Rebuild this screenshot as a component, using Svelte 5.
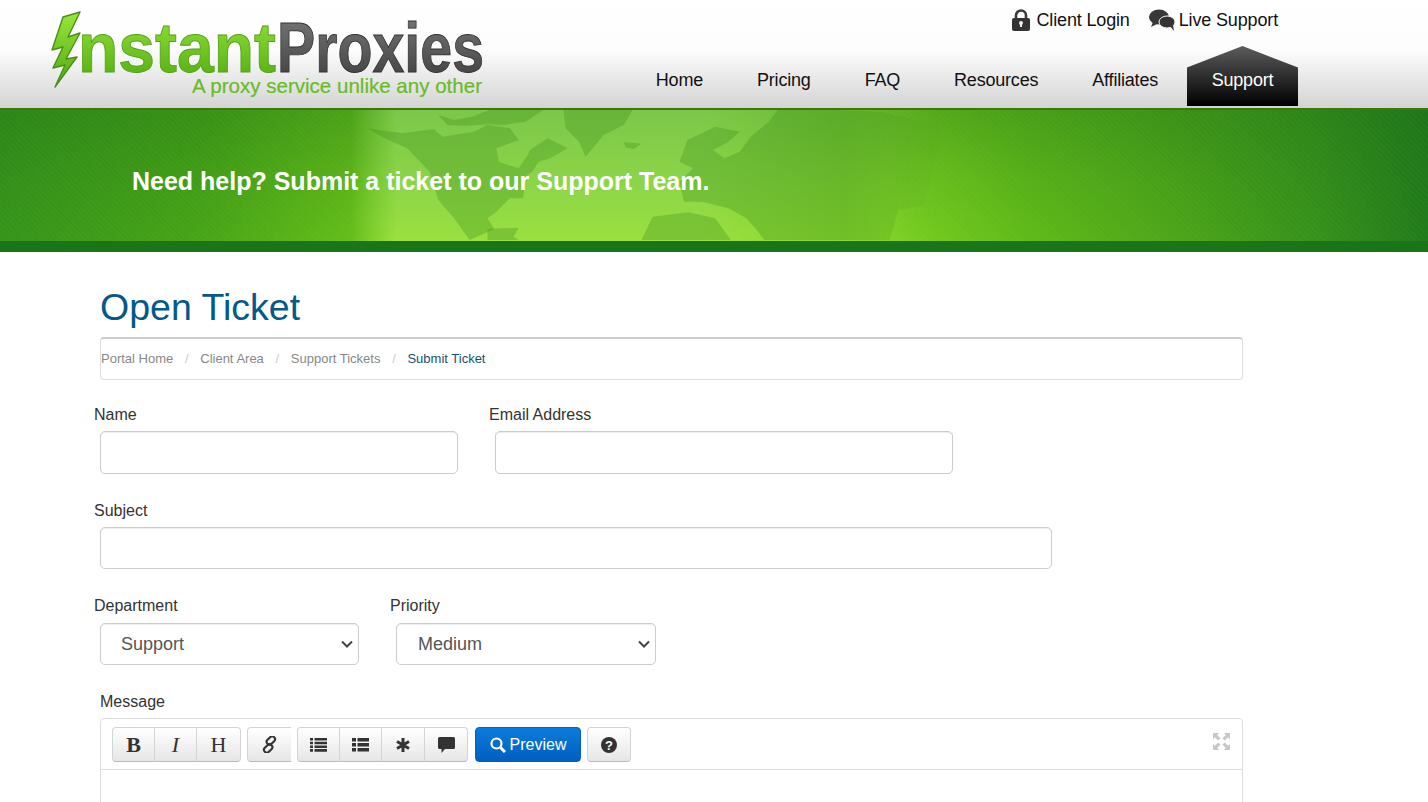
<script>
  const nav = ['Home', 'Pricing', 'FAQ', 'Resources', 'Affiliates'];
  const crumbs = ['Portal Home', 'Client Area', 'Support Tickets'];
</script>

<div class="page">
  <header>
    <a class="logo" href="#top" aria-label="InstantProxies">
      <svg width="490" height="104" viewBox="0 0 490 104">
        <defs>
          <linearGradient id="lg-green" x1="0" y1="0" x2="0" y2="1">
            <stop offset="0" stop-color="#97e83c" />
            <stop offset="1" stop-color="#4fa80f" />
          </linearGradient>
          <linearGradient id="lg-grey" x1="0" y1="0" x2="0" y2="1">
            <stop offset="0" stop-color="#7c7c7c" />
            <stop offset="1" stop-color="#3c3c3c" />
          </linearGradient>
        </defs>
        <polygon
          points="80,12 63,17 52,50 63,47 53,68 65,65 55,87 77,57 66,59 80,33 68,37"
          fill="url(#lg-green)" stroke="#4c8f18" stroke-width="1.4" stroke-linejoin="round"
        />
        <text class="word" x="78" y="72" textLength="198" lengthAdjust="spacingAndGlyphs"
          fill="url(#lg-green)" stroke="#57a01c">nstant</text>
        <text class="word" x="277" y="72" textLength="207" lengthAdjust="spacingAndGlyphs"
          fill="url(#lg-grey)" stroke="#333">Proxies</text>
        <text class="tag" x="192" y="93" textLength="290" lengthAdjust="spacingAndGlyphs">A proxy service unlike any other</text>
      </svg>
    </a>
    <div class="right">
      <div class="top-links">
        <a href="#top">
          <svg width="18" height="22" viewBox="0 0 18 22">
            <path d="M4 10V6.5a5 5 0 0 1 10 0V10" fill="none" stroke="#3a3a3a" stroke-width="2.6" />
            <rect x="0" y="9" width="18" height="13" rx="2" fill="#333" />
            <circle cx="9" cy="14" r="2" fill="#eee" />
            <rect x="8" y="14" width="2" height="4" fill="#eee" />
          </svg>
          Client Login
        </a>
        <a class="chat" href="#top">
          <svg width="26" height="23" viewBox="0 0 26 23">
            <ellipse cx="10" cy="8" rx="10" ry="7.5" fill="#383838" />
            <path d="M4 13l-2 5 6-3z" fill="#383838" />
            <ellipse cx="18" cy="13" rx="8" ry="6" fill="#333" stroke="#f4f4f4" stroke-width="1" />
            <path d="M21 17l4 5-1-6z" fill="#333" />
          </svg>
          Live Support
        </a>
      </div>
      <nav>
        {#each nav as item}
          <a href="#top">{item}</a>
        {/each}
        <a class="active" href="#top">Support</a>
      </nav>
    </div>
  </header>

  <section class="banner">
    <div class="glow"></div>
    <svg class="map" width="700" height="131" viewBox="0 15 1568 393" preserveAspectRatio="none" aria-hidden="true">
      <g fill="#3f8f1c" fill-opacity="0.32">
        <path d="M150 70L230 85 300 72 320 95 390 80 420 60 470 70 490 105 440 130 445 170 490 190 510 150 515 135 555 100 600 130 560 160 535 170 520 200 505 215 500 280 470 280 440 320 420 340 435 372 380 405 345 340 310 285 290 200 240 130 190 100Z" />
        <path d="M590 15L745 15 725 60 680 90 640 155 625 110 595 70Z" />
        <path d="M310 30L345 45 385 35 425 15 545 15 505 50 455 60 420 58 370 62 330 60Z" />
        <path d="M725 112L765 116 748 132 730 128Z" />
        <path d="M850 170L868 105 900 85 930 65 985 80 960 110 925 135 950 160 985 140 1010 95 1050 50 1070 15 1200 15 1300 20 1430 60 1440 120 1420 170 1400 300 1340 315 1320 405 1040 405 1020 370 1000 340 960 310 900 290 860 290 850 230 880 190Z" />
        <path d="M420 372L490 368 478 395 490 405 420 405Z" />
        <path d="M765 405L790 335 870 322 930 340 965 405Z" />
      </g>
    </svg>
    <h2>Need help? Submit a ticket to our Support Team.</h2>
  </section>
  <div class="strip"></div>

  <main>
    <h1>Open Ticket</h1>
    <ol class="crumbs">
      {#each crumbs as c}
        <li><a href="#top">{c}</a><span>/</span></li>
      {/each}
      <li class="current">Submit Ticket</li>
    </ol>

    <form>
      <div class="row">
        <div class="field f-name">
          <label for="name">Name</label>
          <input id="name" class="w-name" type="text" />
        </div>
        <div class="field">
          <label for="email">Email Address</label>
          <input id="email" class="w-email" type="email" />
        </div>
      </div>
      <div class="row">
        <div class="field">
          <label for="subject">Subject</label>
          <input id="subject" class="w-subject" type="text" />
        </div>
      </div>
      <div class="row selects">
        <div class="field f-dept">
          <label for="dept">Department</label>
          <select id="dept" class="w-dept"><option>Support</option></select>
        </div>
        <div class="field">
          <label for="prio">Priority</label>
          <select id="prio" class="w-prio"><option>Medium</option></select>
        </div>
      </div>

      <div class="message">
        <label for="msg">Message</label>
        <div class="editor">
          <div class="toolbar">
            <div class="group">
              <button type="button" class="b-43 glyph bold">B</button>
              <button type="button" class="b-42 glyph ital">I</button>
              <button type="button" class="b-44 glyph">H</button>
            </div>
            <div class="group">
              <button type="button" class="b-44 open" aria-label="Link">
                <svg width="17" height="17" viewBox="0 0 18 18">
                  <g fill="none" stroke="#333" stroke-width="2.200" transform="rotate(-45 9 9)">
                    <rect x="8" y="4" width="10" height="6" rx="3" />
                    <rect x="0" y="8" width="10" height="6" rx="3" />
                  </g>
                </svg>
              </button>
            </div>
            <div class="group">
              <button type="button" class="b-43" aria-label="List">
                <svg width="17" height="14" viewBox="0 0 17 14" fill="#333">
                  <path d="M0 0h3v2.600H0zM4.500 0h12.500v2.600H4.500zM0 3.700h3v2.600H0zM4.500 3.700h12.500v2.600H4.500zM0 7.400h3v2.600H0zM4.500 7.400h12.500v2.600H4.500zM0 11.100h3v2.600H0zM4.500 11.100h12.500v2.600H4.500z" />
                </svg>
              </button>
              <button type="button" class="b-42" aria-label="Ordered list">
                <svg width="17" height="14" viewBox="0 0 17 14" fill="#333">
                  <path d="M0 0h4v3.600H0zM5.500 0h11.500v3.600H5.500zM0 5h4v3.600H0zM5.500 5h11.500v3.600H5.500zM0 10h4v3.600H0zM5.500 10h11.500v3.600H5.500z" />
                </svg>
              </button>
              <button type="button" class="b-43" aria-label="Code">
                <svg width="14" height="14" viewBox="0 0 14 14" fill="none" stroke="#333" stroke-width="3">
                  <path d="M7 0v14M1 3.500l12 7M13 3.500l-12 7" />
                </svg>
              </button>
              <button type="button" class="b-43" aria-label="Quote">
                <svg width="17" height="16" viewBox="0 0 17 16" fill="#333">
                  <path d="M1.500 0h14A1.500 1.500 0 0 1 17 1.500v9A1.500 1.500 0 0 1 15.500 12H7l-3.500 4V12h-2A1.500 1.500 0 0 1 0 10.500v-9A1.500 1.500 0 0 1 1.500 0z" />
                </svg>
              </button>
            </div>
            <button type="button" class="preview">
              <svg width="16" height="16" viewBox="0 0 16 16" fill="none" stroke="#fff">
                <circle cx="6.500" cy="6.500" r="5" stroke-width="2.200" />
                <path d="M10.500 10.500l4.500 4.500" stroke-width="3" />
              </svg>
              Preview
            </button>
            <div class="group">
              <button type="button" class="b-44" aria-label="Help">
                <svg width="16" height="16" viewBox="0 0 16 16">
                  <circle cx="8" cy="8" r="8" fill="#333" />
                  <text x="8" y="12.500" text-anchor="middle" class="q">?</text>
                </svg>
              </button>
            </div>
          </div>
          <svg class="expand" width="17" height="17" viewBox="0 0 18 18" fill="#c8c8c8" aria-hidden="true">
            <path d="M0 0h6.500L4.500 2 8 5.500 5.500 8 2 4.500 0 6.500zM18 0v6.500L16 4.500 12.500 8 10 5.500 13.500 2 11.500 0zM0 18v-6.500L2 13.500 5.500 10 8 12.500 4.500 16 6.500 18zM18 18h-6.500L13.500 16 10 12.500 12.500 10 16 13.500 18 11.500z" />
          </svg>
          <textarea id="msg"></textarea>
        </div>
      </div>
    </form>
  </main>
</div>

<style>
  :global(html), :global(body) { overflow: hidden; }
  .page {
    height: 802px;
    overflow: hidden;
    background: #fff;
    color: #333;
    font-family: "Liberation Sans", Arial, sans-serif;
  }
  a { color: inherit; text-decoration: none; }

  header {
    display: flex;
    height: 108px;
    background: linear-gradient(180deg, #fff 0, #fdfdfd 45%, #d4d4d4 100%);
  }
  .logo { display: block; flex: none; height: 104px; }
  .logo svg { display: block; }
  .word { font: bold 71px "Liberation Sans", Arial, sans-serif; stroke-width: 0.9; }
  .tag { font: 21px "Liberation Sans", Arial, sans-serif; fill: #69bb27; stroke: #69bb27; stroke-width: 0.2; }
  .right { margin-left: auto; padding-right: 130px; }
  .top-links {
    display: flex;
    justify-content: flex-end;
    gap: 19px;
    height: 46px;
    padding: 9px 20px 0 0;
    box-sizing: border-box;
    font-size: 18px;
    letter-spacing: -0.15px;
    color: #111;
  }
  .top-links a { display: flex; align-items: center; gap: 6px; height: 22px; }
  .top-links a.chat { gap: 4px; }
  nav { display: flex; height: 60px; font-size: 18px; letter-spacing: -0.2px; color: #111; }
  nav a { padding: 24px 27px 0; line-height: 21px; }
  nav a.active {
    width: 111px;
    box-sizing: border-box;
    margin-left: 2px;
    padding: 24px 0 0;
    text-align: center;
    color: #fff;
    background: linear-gradient(180deg, #5c5c5c 0, #2e2e2e 50%, #000 100%);
    clip-path: polygon(50% 0, 100% 36%, 100% 100%, 0 100%, 0 36%);
  }

  .banner {
    position: relative;
    overflow: hidden;
    height: 131px;
    border-top: 2px solid #3b7a05;
    background:
      repeating-linear-gradient(45deg, rgba(255,255,255,.02) 0 2px, transparent 2px 4px),
      linear-gradient(180deg, rgba(25,105,20,.34) 0, rgba(25,105,20,.12) 55%, transparent 100%),
      linear-gradient(90deg, #35941a 0, #47a416 14%, #62bc18 24%, #7ed41f 33%, #7ed020 60%, #70c81c 66%, #5fba18 72%, #4da618 82%, #36921a 92%, #217b1a 100%);
  }
  .glow {
    position: absolute;
    left: 350px;
    top: 0;
    width: 590px;
    height: 100%;
    background: linear-gradient(180deg, #7cc74a 0, #8cd548 55%, #9ae040 100%);
    -webkit-mask-image: linear-gradient(90deg, transparent 0, #000 8%, #000 60%, transparent 100%);
    mask-image: linear-gradient(90deg, transparent 0, #000 8%, #000 60%, transparent 100%);
  }
  .map {
    position: absolute;
    left: 300px;
    top: 0;
    display: block;
    -webkit-mask-image: linear-gradient(90deg, #000 0, #000 78%, transparent 92%);
    mask-image: linear-gradient(90deg, #000 0, #000 78%, transparent 92%);
  }
  h2 {
    position: relative;
    margin: 0;
    padding: 56px 0 0 132px;
    font-size: 25px;
    line-height: 30px;
    font-weight: bold;
    color: #fff;
  }
  .strip { height: 11px; background: #1a7519; }

  main { padding: 35px 0 0 100px; width: 1143px; }
  h1 {
    margin: 0 0 10px;
    font-size: 37.500px;
    line-height: 40px;
    font-weight: normal;
    color: #03588c;
  }
  .crumbs {
    display: flex;
    align-items: center;
    height: 43px;
    box-sizing: border-box;
    margin: 0 0 24px;
    padding: 0 0 2px;
    list-style: none;
    border: 1px solid #ddd;
    border-top: 2px solid #ccc;
    border-radius: 4px;
    font-size: 13px;
    color: #888;
  }
  .crumbs span { padding: 0 11.700px; color: #ccc; }
  .crumbs .current { color: #1b4f72; }

  .row { display: flex; margin: 0 0 26px -6px; }
  .field { display: flex; flex-direction: column; align-items: flex-start; }
  .f-name { width: 395px; }
  .f-dept { width: 296px; }
  label { display: block; padding-top: 1px; font-size: 16px; line-height: 20px; color: #333; margin-bottom: 6px; }
  .selects label { margin-bottom: 7px; }
  .field input, .field select { margin-left: 6px; }
  input, select {
    display: block;
    height: 43px;
    box-sizing: border-box;
    border: 1px solid #ccc;
    border-radius: 5px;
    background-color: #fff;
    box-shadow: inset 0 1px 1px rgba(0,0,0,.075);
    font: 18px "Liberation Sans", Arial, sans-serif;
    color: #555;
  }
  select {
    height: 42px;
    padding: 0 0 0 20px;
    appearance: none;
    -webkit-appearance: none;
    background-image: url("data:image/svg+xml,%3Csvg xmlns='http://www.w3.org/2000/svg' width='12' height='8'%3E%3Cpath d='M1 1.500l5 5 5-5' fill='none' stroke='%23444' stroke-width='2'/%3E%3C/svg%3E");
    background-repeat: no-repeat;
    background-position: right 5px center;
  }
  .w-name { width: 358px; }
  .w-email { width: 458px; }
  .w-subject { width: 952px; height: 42px; }
  .w-dept { width: 259px; }
  .w-prio { width: 260px; padding-left: 21px; }

  .editor {
    position: relative;
    border: 1px solid #ddd;
    border-radius: 4px 4px 0 0;
  }
  .toolbar {
    display: flex;
    gap: 6px;
    height: 51px;
    box-sizing: border-box;
    padding: 8px 11px 0;
    border-bottom: 1px solid #ddd;
  }
  .group { display: flex; height: 35px; }
  .group button {
    display: flex;
    align-items: center;
    justify-content: center;
    height: 35px;
    padding: 0;
    border: 1px solid #d4d4d4;
    border-bottom-color: #bbb;
    border-left-width: 0;
    background: linear-gradient(180deg, #fff 0, #e6e6e6 100%);
    color: #333;
    font: 22px "Liberation Serif", "Times New Roman", serif;
  }
  .group button:first-child { border-left-width: 1px; border-radius: 4px 0 0 4px; }
  .group button:last-child { border-radius: 0 4px 4px 0; }
  .group button:only-child { border-radius: 4px; }
  .group button.open { border-right: 0; border-radius: 4px 0 0 4px; }
  .b-42 { width: 42px; }
  .b-43 { width: 43px; }
  .b-44 { width: 44px; }
  .group button.bold { font-weight: bold; }
  .group button.ital { font-style: italic; }
  .preview {
    display: flex;
    align-items: center;
    justify-content: center;
    gap: 4px;
    width: 106px;
    height: 35px;
    margin-left: 1px;
    padding: 0;
    border: 1px solid #0362bb;
    border-radius: 4px;
    background: linear-gradient(180deg, #0b7bd9 0, #005fc0 100%);
    color: #fff;
    font: 16px "Liberation Sans", Arial, sans-serif;
  }
  .q { font: bold 13px "Liberation Sans", Arial, sans-serif; fill: #fff; }
  .expand { position: absolute; top: 14px; right: 12px; }
  textarea {
    display: block;
    width: 100%;
    height: 260px;
    box-sizing: border-box;
    border: 0;
    outline: 0;
    resize: none;
  }
</style>
